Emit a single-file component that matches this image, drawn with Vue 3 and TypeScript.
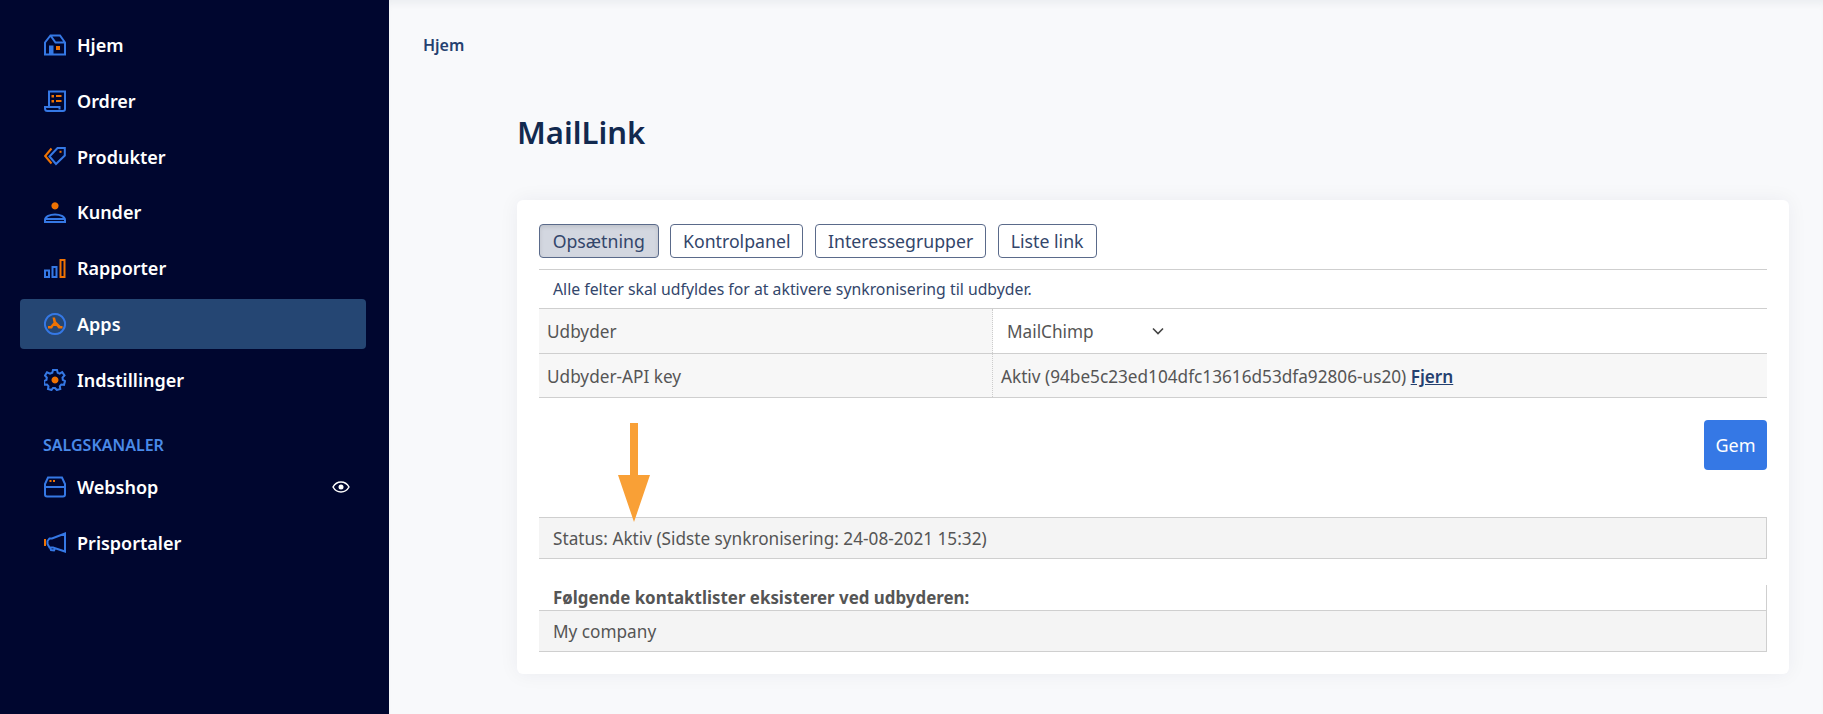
<script setup lang="ts">
interface Shape { d: string; c: 'b' | 'o'; f?: boolean }
interface NavItem { label: string; active?: boolean; eye?: boolean; icon: Shape[] }

const main: NavItem[] = [
  { label: 'Hjem', icon: [
    { d: 'M1 8.500 6.500 1.500H16L21 8.500V20.500H1Z M6.500 1.500 11.500 8.500H21', c: 'b' },
    { d: 'M5 11.500H9.500V20.500H5Z', c: 'b', f: true },
    { d: 'M12 12H16V16H12Z', c: 'o', f: true },
  ] },
  { label: 'Ordrer', icon: [
    { d: 'M5 17V1.500H21V19C21 20.200 20.200 21 19 21H3.500C2 21 1 20 1 18.500V17H15.500V19.500', c: 'b' },
    { d: 'M7.500 5H10V7.500H7.500Z M7.500 10H10V12.500H7.500Z M12 5H17.500V7H12Z M12 10H17.500V12H12Z', c: 'o', f: true },
  ] },
  { label: 'Produkter', icon: [
    { d: 'M7.500 2.500 1.200 10 7.500 17.500', c: 'o' },
    { d: 'M13.500 2H20.800V9.500L12 18 5.500 10.500Z', c: 'b' },
    { d: 'M15.500 4.800H17.500V6.800H15.500Z', c: 'o', f: true },
  ] },
  { label: 'Kunder', icon: [
    { d: 'M1 21V19C1 15.500 6 13.500 11 13.500S21 15.500 21 19V21Z M1 18H21', c: 'b' },
    { d: 'M11 1.300A3.600 3.600 0 1 1 10.990 1.300Z', c: 'o', f: true },
  ] },
  { label: 'Rapporter', icon: [
    { d: 'M1 13.500H5V20H1Z M8.500 10H12.500V20H8.500Z', c: 'b' },
    { d: 'M16.500 3H20.500V20H16.500Z', c: 'o' },
  ] },
  { label: 'Apps', active: true, icon: [
    { d: 'M11 1A10 10 0 1 1 10.990 1Z', c: 'b' },
    { d: 'M8.500 4.500H11L12 8.500 16.500 13H18.500V15.500H14.500L12.500 13H9.500L8 15.500H4V13H6.500L9.500 9.500Z', c: 'o', f: true },
  ] },
  { label: 'Indstillinger', icon: [
    { d: 'M9 1H13L13.700 3.800 15.700 4.700 18.200 3.200 20.500 6.500 18.500 8.500 18.800 10.800 21 12 20 15.800 17.300 15.500 15.800 17.200 16.300 20 12.800 21 11 19 9 19 7.500 21 4 20 4.500 17.200 3 15.500 .5 15.800 0 12 2.500 10.800 2.800 8.500 1 6.500 3 3.300 6 4.700 8.300 3.800Z', c: 'b' },
    { d: 'M11 7.500A3.500 3.500 0 1 1 10.990 7.500Z', c: 'o', f: true },
  ] },
]

const channels: NavItem[] = [
  { label: 'Webshop', eye: true, icon: [
    { d: 'M4 1.500H18L21 8V11H1V8Z M1 11V18.500C1 20 2 20.500 3 20.500H19C20 20.500 21 20 21 18.500V11', c: 'b' },
    { d: 'M5.500 4H7.500V6H5.500Z M9 4H11V6H9Z', c: 'o', f: true },
  ] },
  { label: 'Prisportaler', icon: [
    { d: 'M21 1.500V19.500L9 15.500H5.500L3.500 12V9L5.500 6.500H8Z M6 15.500 7 18 10 18.500 11 16.500', c: 'b' },
    { d: 'M0 7H2V14H0Z', c: 'o', f: true },
  ] },
]

const tabs = ['Opsætning', 'Kontrolpanel', 'Interessegrupper', 'Liste link']
</script>

<template>
  <div class="page">
    <aside class="sidebar">
      <nav class="nav">
        <a v-for="item in main" :key="item.label" class="nav-item" :class="{ active: item.active }">
          <svg class="nav-icon" viewBox="0 0 22 22" width="22" height="22">
            <path
              v-for="(s, i) in item.icon"
              :key="i"
              :d="s.d"
              :fill="s.f ? (s.c === 'o' ? '#ee7203' : '#3578e5') : 'none'"
              :stroke="s.f ? 'none' : (s.c === 'o' ? '#ee7203' : '#3578e5')"
              stroke-width="2"
            />
          </svg>
          <span>{{ item.label }}</span>
        </a>
      </nav>
      <div class="nav-title">SALGSKANALER</div>
      <nav class="nav">
        <a v-for="item in channels" :key="item.label" class="nav-item">
          <svg class="nav-icon" viewBox="0 0 22 22" width="22" height="22">
            <path
              v-for="(s, i) in item.icon"
              :key="i"
              :d="s.d"
              :fill="s.f ? (s.c === 'o' ? '#ee7203' : '#3578e5') : 'none'"
              :stroke="s.f ? 'none' : (s.c === 'o' ? '#ee7203' : '#3578e5')"
              stroke-width="2"
            />
          </svg>
          <span>{{ item.label }}</span>
          <svg v-if="item.eye" class="eye" viewBox="0 0 18 12" width="18" height="12">
            <path d="M1 6C3 2.500 6 1 9 1S15 2.500 17 6C15 9.500 12 11 9 11S3 9.500 1 6Z" fill="none" stroke="#fff" stroke-width="1.5" />
            <circle cx="9" cy="6" r="2.500" fill="#fff" />
          </svg>
        </a>
      </nav>
    </aside>

    <main class="main">
      <div class="crumb">Hjem</div>
      <div class="content">
        <h1 class="title">MailLink</h1>
        <section class="card">
          <div class="tabs">
            <button v-for="(t, i) in tabs" :key="t" class="tab" :class="{ on: i === 0 }">{{ t }}</button>
          </div>
          <p class="notice">Alle felter skal udfyldes for at aktivere synkronisering til udbyder.</p>
          <div class="row first">
            <div class="cell-l">Udbyder</div>
            <div class="cell-r select">
              <span>MailChimp</span>
              <svg viewBox="0 0 12 8" width="12" height="8">
                <path d="M1 1.500 6 6.500 11 1.500" fill="none" stroke="#444" stroke-width="1.6" />
              </svg>
            </div>
          </div>
          <div class="row second">
            <div class="cell-l">Udbyder-API key</div>
            <div class="cell-r">Aktiv (94be5c23ed104dfc13616d53dfa92806-us20) <a class="link">Fjern</a></div>
          </div>
          <div class="actions"><button class="save">Gem</button></div>
          <div class="status">
            Status: Aktiv (Sidste synkronisering: 24-08-2021 15:32)
            <svg class="arrow" viewBox="0 0 32 99" width="32" height="99">
              <path d="M12 0H20V52H32L16 99 0 52H12Z" fill="#f9a036" />
            </svg>
          </div>
          <div class="list-head">Følgende kontaktlister eksisterer ved udbyderen:</div>
          <div class="list-row">My company</div>
        </section>
      </div>
    </main>
  </div>
</template>

<style scoped>
.page {
  display: flex;
  height: 714px;
  overflow: hidden;
  font-family: "Noto Sans", "Open Sans", sans-serif;
  background: #f8f9fb;
}
.sidebar {
  width: 389px;
  flex: none;
  background: #00062f;
  padding: 20px 23px 0 20px;
  box-sizing: border-box;
}
.nav {
  display: flex;
  flex-direction: column;
  gap: 5.800px;
}
.nav-item {
  display: flex;
  align-items: center;
  height: 50px;
  padding: 0 16px 0 24px;
  border-radius: 4px;
  color: #fff;
  font-size: 18px;
  font-weight: 600;
}
.nav-item.active {
  background: #254673;
}
.nav-icon {
  flex: none;
  margin-right: 11px;
}
.eye {
  margin-left: auto;
}
.nav-title {
  margin: 32px 0 0 23px;
  height: 16px;
  line-height: 16px;
  color: #4a8ae8;
  font-size: 16px;
  font-weight: 600;
}
.nav-title + .nav {
  margin-top: 9px;
}
.main {
  flex: 1;
  min-width: 0;
  padding: 0 34px 0 34px;
  box-shadow: inset 0 7px 7px -3px rgba(20, 30, 60, 0.05);
}
.crumb {
  margin-top: 35px;
  line-height: 20px;
  font-size: 16px;
  font-weight: 600;
  color: #25406f;
}
.content {
  margin-left: 94px;
}
.title {
  margin: 54px 0 0;
  line-height: 46px;
  font-size: 31px;
  font-weight: 600;
  color: #12294f;
}
.card {
  margin-top: 45px;
  padding: 24px 22px 22px;
  background: #fff;
  border-radius: 6px;
  box-shadow: 0 0 20px rgba(20, 30, 60, 0.06);
  color: #555;
  font-size: 17.200px;
}
.tabs {
  display: flex;
  gap: 11.500px;
  padding-bottom: 11px;
  border-bottom: 1px solid #cfcfcf;
}
.tab {
  height: 34px;
  padding: 0 12px;
  border: 1px solid #5a6a8a;
  border-radius: 4px;
  background: #fff;
  color: #33466b;
  font: inherit;
  font-size: 17.700px;
}
.tab.on {
  min-width: 119.500px;
  background: #d3d7e0;
  box-shadow: inset 0 2px 4px rgba(0, 0, 0, 0.1);
}
.notice {
  margin: 0;
  height: 38px;
  line-height: 38px;
  padding-left: 14px;
  font-size: 15.800px;
  color: #33466b;
}
.row {
  display: flex;
  border-top: 1px solid #cfcfcf;
}
.row.first {
  height: 44px;
}
.row.second {
  height: 43px;
  background: #f7f7f7;
  border-bottom: 1px solid #cfcfcf;
}
.row.second > div {
  padding-top: 2px;
}
.cell-l {
  width: 445px;
  flex: none;
  padding-left: 8px;
  background: #f7f7f7;
  border-right: 1px dotted #ccc;
  display: flex;
  align-items: center;
}
.cell-r {
  flex: 1;
  padding-left: 8px;
  display: flex;
  align-items: center;
  white-space: pre;
}
.select span {
  width: 145px;
  padding-left: 6px;
}
.link {
  color: #25406f;
  font-weight: 600;
  text-decoration: underline;
}
.actions {
  display: flex;
  justify-content: flex-end;
  margin-top: 22px;
}
.save {
  width: 63px;
  height: 50px;
  border: 0;
  border-radius: 4px;
  background: #3578e5;
  color: #fff;
  font: inherit;
  font-size: 18px;
}
.status {
  position: relative;
  margin-top: 47px;
  height: 40px;
  line-height: 42px;
  padding-left: 14px;
  background: #f4f4f4;
  border: solid #cfcfcf;
  border-width: 1px 1px 1px 0;
}
.arrow {
  position: absolute;
  left: 79px;
  top: -95px;
}
.list-head {
  margin-top: 26px;
  height: 25px;
  line-height: 25px;
  padding-left: 14px;
  font-size: 16.900px;
  font-weight: 700;
  border-right: 1px solid #cfcfcf;
}
.list-row {
  height: 40px;
  line-height: 42px;
  padding-left: 14px;
  background: #f4f4f4;
  border: solid #cfcfcf;
  border-width: 1px 1px 1px 0;
}
</style>
